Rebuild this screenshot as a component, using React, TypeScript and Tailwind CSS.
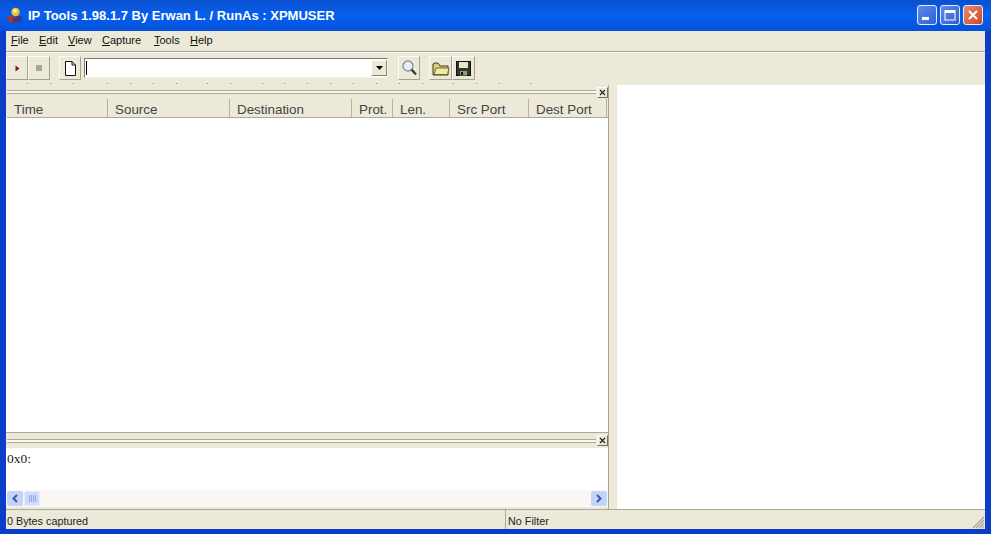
const menus = [
  ['F', 'ile', 'w-[28px]'],
  ['E', 'dit', 'w-[29px]'],
  ['V', 'iew', 'w-[34px]'],
  ['C', 'apture', 'w-[52px]'],
  ['T', 'ools', 'w-[36px]'],
  ['H', 'elp', 'w-[30px]'],
]

const columns = [
  { name: 'Time', w: 'w-[101px]' },
  { name: 'Source', w: 'w-[122px]' },
  { name: 'Destination', w: 'w-[122px]' },
  { name: 'Prot.', w: 'w-[41px]' },
  { name: 'Len.', w: 'w-[57px]' },
  { name: 'Src Port', w: 'w-[79px]' },
  { name: 'Dest Port', w: 'w-[78px]' },
]

const toolbarDots = [27, 50, 73, 107, 130, 153, 176, 207, 230, 262, 284, 307, 330, 353, 376, 399, 422, 453, 476, 499, 530]

function ToolButton({ children, w = 'w-[22px]' }: { children?: React.ReactNode; w?: string }) {
  return (
    <div className={`${w} h-[24px] shrink-0 flex items-center justify-center bg-[#ece9d8] border border-t-[#fbfaf4] border-l-[#fbfaf4] border-r-[#a5a290] border-b-[#a5a290]`}>
      {children}
    </div>
  )
}

function Grip() {
  return (
    <div className="flex items-center gap-[1px] bg-[#ece9d8] h-full">
      <div className="flex-1 h-[4px] border-y border-[#aca899] bg-[#f7f6f0]" />
      <div className="w-[11px] h-[11px] border border-t-white border-l-white border-r-[#716f64] border-b-[#716f64] flex items-center justify-center">
        <svg width="7" height="7" viewBox="0 0 7 7">
          <path d="M1 1 L6 6 M6 1 L1 6" stroke="#222" strokeWidth="1.1" />
        </svg>
      </div>
    </div>
  )
}

function CaptionButton({ kind }: { kind: 'min' | 'max' | 'close' }) {
  const bg = kind === 'close' ? 'bg-gradient-to-br from-[#e88a6c] to-[#cf4526]' : 'bg-gradient-to-br from-[#5f8bea] to-[#2f5fd6]'
  return (
    <div className={`w-[20px] h-[20px] rounded-[3px] border border-[#e4ecfb] flex items-center justify-center ${bg}`}>
      <svg width="14" height="14" viewBox="0 0 14 14">
        {kind === 'min' && <rect x="2" y="9" width="7" height="3" fill="#fff" />}
        {kind === 'max' && (
          <path d="M2 2.5 H12 V12 H2 Z M2 3.5 H12 M2 4.5 H12" fill="none" stroke="#fff" strokeWidth="1.1" />
        )}
        {kind === 'close' && <path d="M3 3 L11 11 M11 3 L3 11" stroke="#fff" strokeWidth="2" />}
      </svg>
    </div>
  )
}

export default function App() {
  return (
    <div className="w-[991px] h-[534px] overflow-hidden flex flex-col bg-[#0a3ec8] font-['Liberation_Sans',sans-serif]">
      {/* title bar */}
      <div className="h-[31px] shrink-0 flex items-center pl-[7px] pr-[8px] bg-gradient-to-b from-[#0a50cf] via-[#0760ee] to-[#0450dc]">
        <svg width="16" height="17" viewBox="0 0 16 17" className="shrink-0">
          <circle cx="8.5" cy="5" r="4.2" fill="#f2c02e" />
          <circle cx="8" cy="3.8" r="1.9" fill="#fdf3b0" />
          <circle cx="3.8" cy="12" r="3.3" fill="#a8382c" />
          <circle cx="12.2" cy="12" r="3.3" fill="#2f3f94" />
          <circle cx="8" cy="13" r="2.6" fill="#5d3454" />
        </svg>
        <div className="ml-[5px] text-[13px] font-bold text-white whitespace-nowrap">
          IP Tools 1.98.1.7 By Erwan L. / RunAs : XPMUSER
        </div>
        <div className="ml-auto flex gap-[3px] -mt-[2px]">
          <CaptionButton kind="min" />
          <CaptionButton kind="max" />
          <CaptionButton kind="close" />
        </div>
      </div>

      <div className="flex-1 mx-[6px] mb-[5px] flex flex-col bg-[#ece9d8] min-h-0">
        {/* menu */}
        <div className="h-[21px] flex items-center pl-[5px] pb-[2px] text-[11px] text-[#111] border-b border-[#aca899] shrink-0">
          {menus.map(([key, rest, w]) => (
            <span key={key} className={w}>
              <span className="underline">{key}</span>
              {rest}
            </span>
          ))}
        </div>

        {/* toolbar */}
        <div className="h-[31px] border-t border-white flex items-center shrink-0">
          <ToolButton>
            <svg width="5" height="7" viewBox="0 0 5 7"><path d="M0.5 0.5 L4.5 3.5 L0.5 6.5 Z" fill="#8b1010" /></svg>
          </ToolButton>
          <ToolButton>
            <div className="w-[6px] h-[6px] bg-[#a9a795]" />
          </ToolButton>
          <div className="w-[9px] shrink-0" />
          <ToolButton>
            <svg width="13" height="15" viewBox="0 0 13 15">
              <path d="M1.5 0.5 H8 L11.5 4 V14.5 H1.5 Z" fill="#fff" stroke="#111" />
              <path d="M8 0.5 V4 H11.5" fill="none" stroke="#111" />
            </svg>
          </ToolButton>
          <div className="w-[3px] shrink-0" />
          <div className="w-[304px] h-[20px] shrink-0 bg-white border border-t-[#7f7c6c] border-l-[#7f7c6c] border-r-[#f6f5ee] border-b-[#f6f5ee] flex items-center justify-between pl-[1px]">
            <div className="w-[1px] h-[14px] bg-black" />
            <div className="w-[16px] h-[16px] bg-[#ece9d8] border border-t-white border-l-white border-r-[#8a8778] border-b-[#8a8778] flex items-center justify-center">
              <svg width="7" height="4" viewBox="0 0 7 4"><path d="M0 0 H7 L3.5 4 Z" fill="#000" /></svg>
            </div>
          </div>
          <div className="w-[10px] shrink-0" />
          <ToolButton>
            <svg width="17" height="18" viewBox="0 0 17 18">
              <circle cx="7" cy="7" r="5" fill="#e4eef5" stroke="#8a949a" strokeWidth="1.4" />
              <path d="M10.5 10.5 L15 15.5" stroke="#3a3a3a" strokeWidth="2.4" />
            </svg>
          </ToolButton>
          <div className="w-[9px] shrink-0" />
          <ToolButton w="w-[23px]">
            <svg width="18" height="15" viewBox="0 0 18 15">
              <path d="M1 3 L1 14 H16 L16 5 H8 L6 2 H3 Z" fill="#d9d272" stroke="#3a3a20" />
              <path d="M2 13.5 L4 7 H17 L15.5 13.5 Z" fill="#f0eaa2" stroke="#6a6a30" />
            </svg>
          </ToolButton>
          <ToolButton w="w-[23px]">
            <svg width="15" height="15" viewBox="0 0 15 15">
              <rect x="0.5" y="0.5" width="14" height="14" fill="#2d3a2d" stroke="#111" />
              <rect x="3" y="1" width="9" height="6" fill="#e8e6c8" />
              <rect x="4" y="10" width="7" height="4.5" fill="#9a9a88" />
              <rect x="5" y="11" width="2" height="3" fill="#111" />
            </svg>
          </ToolButton>
        </div>
        <svg width="979" height="2" className="block shrink-0">
          {toolbarDots.map(x => <rect key={x} x={x - 6} y="0" width="1" height="1" fill="#8a8778" />)}
        </svg>

        {/* main area */}
        <div className="flex-1 flex min-h-0">
          {/* left column */}
          <div className="w-[603px] shrink-0 flex flex-col min-h-0 pl-[1px] border-r border-[#aca899]">
            <div className="h-[14px] shrink-0"><Grip /></div>
            {/* packet list */}
            <div className="h-[19px] flex shrink-0 border-b border-[#aca899] bg-[#ece9d8]">
              {columns.map(c => (
                <div key={c.name} className={`${c.w} flex items-center pl-[7px] pt-[3px] text-[13.4px] leading-none text-[#444] border-r border-[#b5b2a2] whitespace-nowrap`}>
                  {c.name}
                </div>
              ))}
            </div>
            <div className="flex-1 bg-white border-b border-[#aca899] -ml-[1px]" />
            <div className="h-[15px] shrink-0"><Grip /></div>
            {/* hex pane */}
            <div className="h-[42px] shrink-0 bg-white -ml-[1px] pl-[1px] pt-[3px] text-[13.5px] leading-[15px] text-[#222] font-['Liberation_Serif',serif]">
              0x0:
            </div>
            {/* scrollbar */}
            <div className="h-[17px] shrink-0 flex items-center bg-[#fbf7f5] -ml-[1px] pl-[1px]">
              <div className="w-[16px] h-[15px] rounded-[2px] bg-[#c3d3fb] flex items-center justify-center">
                <svg width="8" height="9" viewBox="0 0 8 9"><path d="M6 1 L2.5 4.5 L6 8" fill="none" stroke="#3a5a9c" strokeWidth="2" /></svg>
              </div>
              <div className="ml-[1px] w-[16px] h-[15px] rounded-[2px] bg-[#cddafb] border border-[#e6edfd] flex items-center justify-center">
                <svg width="7" height="7" viewBox="0 0 7 7" shapeRendering="crispEdges"><path d="M0.5 0 V7 M2.5 0 V7 M4.5 0 V7 M6.5 0 V7" stroke="#8fa8e4" strokeWidth="1" /></svg>
              </div>
              <div className="flex-1" />
              <div className="w-[16px] h-[15px] mr-[1px] rounded-[2px] bg-[#c3d3fb] flex items-center justify-center">
                <svg width="8" height="9" viewBox="0 0 8 9"><path d="M2 1 L5.5 4.5 L2 8" fill="none" stroke="#3a5a9c" strokeWidth="2" /></svg>
              </div>
            </div>
            <div className="h-[2px] shrink-0" />
          </div>
          {/* splitter */}
          <div className="w-[8px] shrink-0" />
          {/* right pane */}
          <div className="flex-1 bg-white" />
        </div>

        {/* status bar */}
        <div className="h-[20px] shrink-0 flex items-center border-t border-[#aca899] text-[10.8px] text-[#222]">
          <div className="w-[500px] pl-[1px] pt-[3px] border-r border-[#aca899] h-full flex items-center">0 Bytes captured</div>
          <div className="flex-1 pl-[2px] pt-[3px]">No Filter</div>
          <svg width="13" height="13" viewBox="0 0 13 13" className="self-end">
            <path d="M12 1 L1 12 M12 4 L4 12 M12 7 L7 12 M12 10 L10 12" stroke="#aca899" strokeWidth="1.2" />
          </svg>
        </div>
      </div>
    </div>
  )
}
